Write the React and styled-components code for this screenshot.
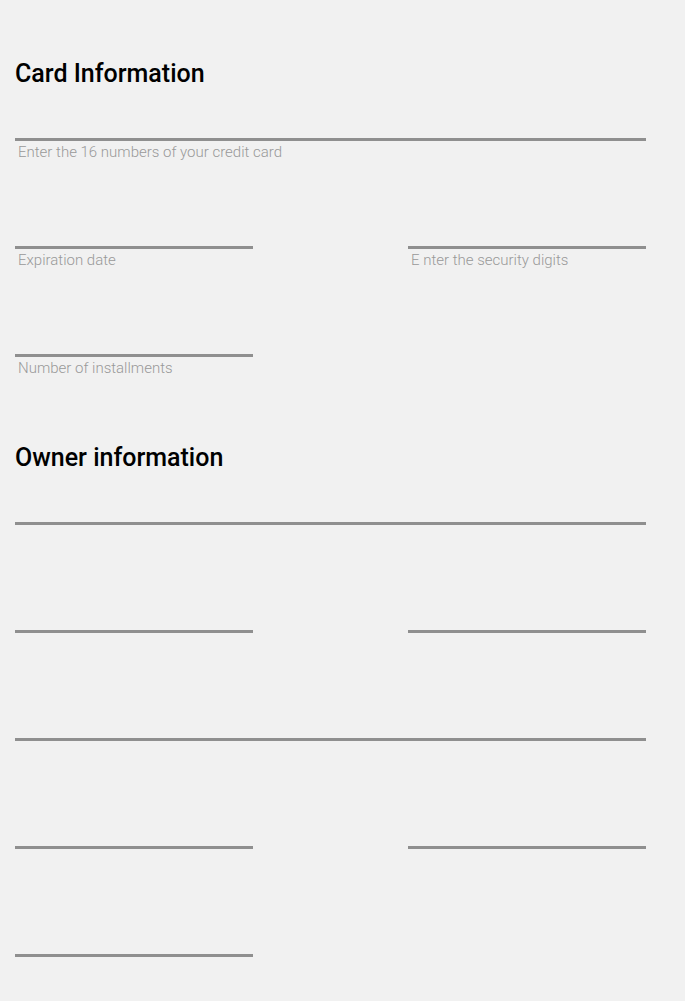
import styled, { createGlobalStyle } from "styled-components";

const GlobalStyle = createGlobalStyle`
  body {
    margin: 0;
    background: #f1f1f1;
    font-family: Roboto, "Liberation Sans", sans-serif;
  }
`;

export default function App() {
  return (
    <Page>
      <GlobalStyle />
      <Section>
        <Title>Card Information</Title>
        <Fields>
          <Field full label="Enter the 16 numbers of your credit card" />
          <Field label="Expiration date" />
          <Field label="E nter the security digits" />
          <Field label="Number of installments" />
        </Fields>
      </Section>
      <Section>
        <Title>Owner information</Title>
        <Fields>
          <Field full />
          <Field />
          <Field />
          <Field full />
          <Field />
          <Field />
          <Field />
        </Fields>
      </Section>
    </Page>
  );
}

function Field({ label, full }) {
  return (
    <FieldBox $full={full}>
      <Input type="text" />
      <Label>{label}</Label>
    </FieldBox>
  );
}

const Page = styled.main`
  width: 631px;
  padding: 60px 0 40px 15px;
  display: flex;
  flex-direction: column;
  gap: 68px;
`;

const Section = styled.section`
  display: flex;
  flex-direction: column;
`;

const Title = styled.h2`
  margin: 0 0 5px;
  font-size: 25px;
  line-height: 28px;
  font-weight: 500;
  color: #000;
`;

const Fields = styled.div`
  display: grid;
  grid-template-columns: 238px 238px;
  justify-content: space-between;
  row-gap: 41px;
`;

const FieldBox = styled.div`
  display: flex;
  flex-direction: column;
  grid-column: ${(p) => (p.$full ? "1 / -1" : "auto")};
`;

const Input = styled.input`
  height: 48px;
  box-sizing: border-box;
  padding: 0 3px;
  background: transparent;
  border: none;
  border-bottom: 3px solid #8f8f8f;
  outline: none;
  font: inherit;
  font-size: 16px;
`;

const Label = styled.span`
  margin-top: 3px;
  padding-left: 3px;
  min-height: 16px;
  font-size: 15px;
  line-height: 16px;
  font-weight: 300;
  color: #999;
`;
